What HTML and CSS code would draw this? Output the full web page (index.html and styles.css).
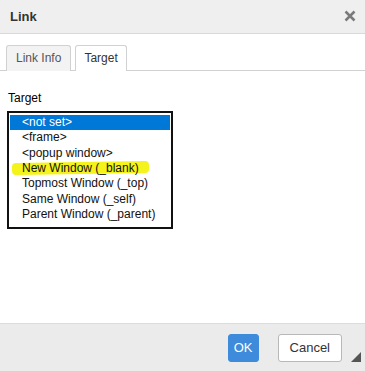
FILE: index.html
```html
<!DOCTYPE html>
<html lang="en">

<head>
	<meta charset="UTF-8">
	<meta name="viewport" content="width=device-width, initial-scale=1.0">
	<title>Link</title>
	<link rel="stylesheet" href="styles.css">
</head>

<body>
	<div class="dialog">
		<div class="head">
			<span class="title">Link</span>
			<svg class="close" width="12" height="12" viewBox="0 0 12 12">
				<path d="M1.5 1.5 L10.5 10.5 M10.5 1.5 L1.5 10.5" stroke="#7a7a7a" stroke-width="2.5" />
			</svg>
		</div>

		<div class="tabs">
			<span class="tab">Link Info</span>
			<span class="tab active">Target</span>
		</div>

		<div class="content">
			<div class="label">Target</div>
			<ul class="list">
				<li class="sel">&lt;not set&gt;</li>
				<li>&lt;frame&gt;</li>
				<li>&lt;popup window&gt;</li>
				<li class="mark"><span>New Window (_blank)</span></li>
				<li>Topmost Window (_top)</li>
				<li>Same Window (_self)</li>
				<li>Parent Window (_parent)</li>
			</ul>
		</div>

		<div class="foot">
			<span class="btn ok">OK</span>
			<span class="btn">Cancel</span>
			<span class="grip"></span>
		</div>
	</div>
</body>

</html>
```

FILE: styles.css
```css
* {
	margin: 0;
	padding: 0;
	box-sizing: border-box;
}

html,
body {
	width: 100%;
	height: 100%;
}

body {
	font-family: "Liberation Sans", Arial, sans-serif;
	font-size: 12px;
	color: #000;
	background: #fff;
}

.dialog {
	display: flex;
	flex-direction: column;
	height: 371px;
	position: relative;
}

.head {
	display: flex;
	align-items: center;
	justify-content: space-between;
	height: 34px;
	padding: 0 9px 0 10px;
	background: #efefef;
	border-bottom: 1px solid #d9d9d9;
}

.title {
	font-weight: bold;
	font-size: 13px;
	color: #333;
}

.close {
	display: block;
	margin-top: -1px;
}

.tabs {
	display: flex;
	gap: 4px;
	padding: 11px 0 0 6px;
	border-bottom: 1px solid #d1d1d1;
}

.tab {
	height: 26px;
	line-height: 24px;
	padding: 0 9px;
	margin-bottom: -1px;
	background: #f3f3f3;
	border: 1px solid #d1d1d1;
	border-bottom: none;
	border-radius: 3px 3px 0 0;
	color: #555;
}

.tab.active {
	background: #fff;
	color: #333;
	padding: 0 8px;
}

.content {
	flex: 1;
	padding: 20px 0 0 7px;
}

.label {
	line-height: 15px;
	padding-left: 1px;
	margin-bottom: 5px;
}

.list {
	list-style: none;
	width: 166px;
	border: 2px solid #111;
	padding: 2px 1px 5px 1px;
}

.list li {
	line-height: 15.33px;
	height: 15.33px;
	padding-left: 12px;
	white-space: nowrap;
	color: #111;
}

.list li.sel {
	background: #0078d7;
	color: #fff;
}

.mark {
	position: relative;
	z-index: 0;
}

.mark span {
	position: relative;
}

.mark span::before {
	content: "";
	position: absolute;
	left: -10px;
	right: -10px;
	top: 1px;
	height: 12px;
	background: #f4f31c;
	border-radius: 4px;
	transform: rotate(-0.8deg);
	z-index: -1;
}

.foot {
	display: flex;
	justify-content: flex-end;
	align-items: center;
	gap: 19px;
	height: 48px;
	padding: 0 23px 0 0;
	background: #ebebeb;
	border-top: 1px solid #dcdcdc;
}

.btn {
	height: 28px;
	line-height: 26px;
	padding: 0 11px;
	background: #fff;
	border: 1px solid #b8b8b8;
	border-radius: 3px;
	color: #333;
	font-size: 13px;
}

.btn.ok {
	background: #3d8bda;
	border-color: #3d8bda;
	color: #fff;
	padding: 0 5px;
}

.grip {
	position: absolute;
	right: 4px;
	bottom: 9px;
	width: 0;
	height: 0;
	border-left: 10px solid transparent;
	border-bottom: 10px solid #555;
}
```
